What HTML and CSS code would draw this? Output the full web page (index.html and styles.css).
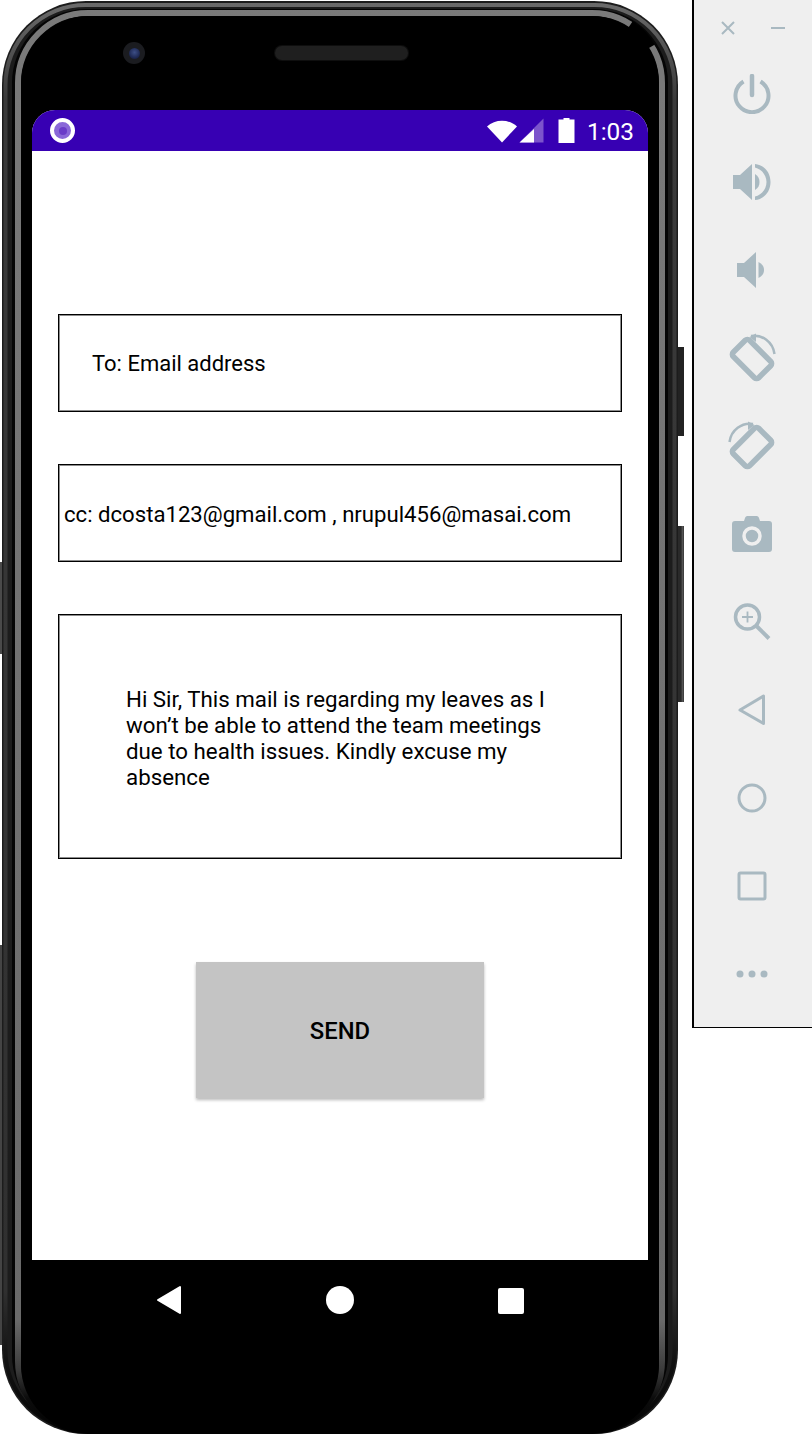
FILE: index.html
```html
<!DOCTYPE html>
<html lang="en">
<head>
<meta charset="utf-8">
<title>Email app on emulator</title>
<link rel="stylesheet" href="styles.css">
</head>
<body>
<div class="stage">
  <div class="device">
    <div class="key key-left-a"></div>
    <div class="key key-left-b"></div>
    <div class="key key-right-a"></div>
    <div class="key key-right-b"></div>
    <svg class="shell" width="680" height="1434" viewBox="0 0 680 1434" aria-hidden="true">
      <defs>
        <linearGradient id="fade" x1="0" y1="0" x2="0" y2="1434" gradientUnits="userSpaceOnUse">
          <stop offset="0" stop-color="#7a7a7a"/>
          <stop offset="0.92" stop-color="#6a6a6a"/>
          <stop offset="0.955" stop-color="#3c3c3c"/>
          <stop offset="0.975" stop-color="#0c0c0c"/>
          <stop offset="1" stop-color="#000"/>
        </linearGradient>
        <linearGradient id="fade2" x1="0" y1="0" x2="0" y2="1434" gradientUnits="userSpaceOnUse">
          <stop offset="0" stop-color="#6c6c6c"/>
          <stop offset="0.07" stop-color="#3a3a3a"/>
          <stop offset="0.9" stop-color="#303030"/>
          <stop offset="0.95" stop-color="#111"/>
          <stop offset="1" stop-color="#050505"/>
        </linearGradient>
      </defs>
      <rect x="2" y="1" width="676" height="1433" rx="84" fill="#1c1c1c"/>
      <rect x="5.5" y="5" width="669" height="1425" rx="80" fill="none" stroke="url(#fade2)" stroke-width="4"/>
      <rect x="12" y="9" width="656" height="1420" rx="74" fill="#050505"/>
      <rect x="18" y="13" width="644" height="1418" rx="70" fill="none" stroke="url(#fade)" stroke-width="6"/>
      <rect x="21" y="16" width="638" height="1417" rx="68" fill="#000"/>
      <path d="M630.500 24.500A70 70 0 0 1 651.500 46.500" fill="none" stroke="#000" stroke-width="8"/>
    </svg>
    <div class="hardware">
      <div class="camera"><div class="lens"></div></div>
      <div class="speaker"></div>
    </div>
    <div class="screen">
      <div class="status">
        <div class="status-dot"><div class="status-dot-core"></div></div>
        <div class="status-right">
          <svg class="ic-wifi" width="32" height="25" viewBox="0 0 32 25"><path d="M1 8.500C9 .8 23 .8 31 8.500L16 24.500Z" fill="#fff"/></svg>
          <svg class="ic-signal" width="25" height="25" viewBox="0 0 25 25"><path d="M24.500 .5V24.500H.5Z" fill="#7c54cc"/><path d="M15 11V24.500H.5L15 11Z" fill="#fff"/></svg>
          <svg class="ic-battery" width="17" height="25" viewBox="0 0 17 25"><path d="M5.500 0H11.500V1.500H16.500V25H.5V1.500H5.500Z" fill="#fff"/></svg>
          <span class="clock">1:03</span>
        </div>
      </div>
      <div class="content">
        <div class="field field-to">To: Email address</div>
        <div class="field field-cc">cc: dcosta123@gmail.com , nrupul456@masai.com</div>
        <div class="field field-body"><p class="body-text">Hi Sir, This mail is regarding my leaves as I won’t be able to attend the team meetings due to health issues. Kindly excuse my absence</p></div>
        <div class="send">SEND</div>
      </div>
    </div>
    <div class="navbar">
      <svg width="26" height="30" viewBox="0 0 26 30"><path d="M24 2V28L2 15Z" fill="#fff" stroke="#fff" stroke-width="2" stroke-linejoin="round"/></svg>
      <div class="nav-home"></div>
      <div class="nav-recent"></div>
    </div>
  </div>
  <aside class="panel">
    <div class="panel-head">
      <svg width="16" height="16" viewBox="0 0 16 16"><path d="M2 2L14 14M14 2L2 14" stroke="#a9b9c1" stroke-width="2" fill="none"/></svg>
      <svg width="16" height="16" viewBox="0 0 16 16"><path d="M1 8H15" stroke="#a9b9c1" stroke-width="2" fill="none"/></svg>
    </div>
    <div class="tool"><svg width="40" height="40" viewBox="0 0 40 40"><path d="M11.500 7.500A16.500 16.500 0 1 0 28.500 7.500" fill="none" stroke="#a9b9c1" stroke-width="4"/><path d="M20 2V21" stroke="#a9b9c1" stroke-width="4.500" stroke-linecap="round" fill="none"/></svg></div>
    <div class="tool"><svg width="40" height="40" viewBox="0 0 40 40"><path d="M1 13H8L20 2V38L8 27H1Z" fill="#a9b9c1"/><path d="M23 12C26.500 14 27.500 17 27.500 20S26.500 26 23 28Z" fill="#a9b9c1"/><path d="M23 2C32 3 38.500 10 38.500 20S32 37 23 38V34.500C29 33 34.500 27.500 34.500 20S29 7 23 5.500Z" fill="#a9b9c1"/></svg></div>
    <div class="tool"><svg width="40" height="40" viewBox="0 0 40 40"><path d="M5 13H12L24 2V38L12 27H5Z" fill="#a9b9c1"/><path d="M26.500 12C30 13.500 32 16.500 32 20S30 26.500 26.500 28Z" fill="#a9b9c1"/></svg></div>
    <div class="tool"><svg width="52" height="52" viewBox="0 0 52 52"><rect x="8" y="15.500" width="36" height="23" rx="3" transform="rotate(45 26 27)" fill="none" stroke="#a9b9c1" stroke-width="5.500"/><path d="M25 4C36 2 47 10 48.500 22" fill="none" stroke="#a9b9c1" stroke-width="2.500"/><path d="M23.500 5L30 1.500L30 10Z" fill="#a9b9c1"/></svg></div>
    <div class="tool"><svg width="52" height="52" viewBox="0 0 52 52"><rect x="8" y="15.500" width="36" height="23" rx="3" transform="rotate(-45 26 27)" fill="none" stroke="#a9b9c1" stroke-width="5.500"/><path d="M27 4C16 2 5 10 3.500 22" fill="none" stroke="#a9b9c1" stroke-width="2.500"/><path d="M28.500 5L22 1.500L22 10Z" fill="#a9b9c1"/></svg></div>
    <div class="tool"><svg width="42" height="38" viewBox="0 0 42 38"><path d="M14 3C14.500 1.500 15.500 1 17 1H25C26.500 1 27.500 1.500 28 3L29 6H38C40 6 41 7 41 9V34C41 36 40 37 38 37H4C2 37 1 36 1 34V9C1 7 2 6 4 6H13Z" fill="#a9b9c1"/><circle cx="21" cy="21" r="8" fill="#a9b9c1" stroke="#efefef" stroke-width="3.500"/></svg></div>
    <div class="tool"><svg width="40" height="40" viewBox="0 0 40 40"><circle cx="15.500" cy="15" r="12" fill="none" stroke="#a9b9c1" stroke-width="3.500"/><path d="M24.500 24L37 36.500" stroke="#a9b9c1" stroke-width="4" fill="none"/><path d="M15.500 9.500V20.500M10 15H21" stroke="#a9b9c1" stroke-width="1.800" fill="none"/></svg></div>
    <div class="tool"><svg width="30" height="34" viewBox="0 0 30 34"><path d="M26.500 3V30.500L3 17Z" fill="none" stroke="#a9b9c1" stroke-width="3" stroke-linejoin="round"/></svg></div>
    <div class="tool"><svg width="32" height="32" viewBox="0 0 32 32"><circle cx="16" cy="16" r="13" fill="none" stroke="#a9b9c1" stroke-width="3"/></svg></div>
    <div class="tool"><svg width="32" height="32" viewBox="0 0 32 32"><rect x="3" y="3" width="26" height="26" rx="1.500" fill="none" stroke="#a9b9c1" stroke-width="3"/></svg></div>
    <div class="tool"><svg width="34" height="10" viewBox="0 0 34 10"><circle cx="5" cy="5" r="3.500" fill="#a9b9c1"/><circle cx="17" cy="5" r="3.500" fill="#a9b9c1"/><circle cx="29" cy="5" r="3.500" fill="#a9b9c1"/></svg></div>
  </aside>
</div>
</body>
</html>
```
FILE: styles.css
```css
* { box-sizing: border-box; }
html, body { margin: 0; padding: 0; background: #fff; }
body { width: 812px; height: 1434px; overflow: hidden; font-family: Roboto, "Liberation Sans", sans-serif; color: #000; }

.stage { display: flex; align-items: flex-start; width: 812px; height: 1434px; }

.device { position: relative; width: 692px; height: 1434px; padding-left: 32px; flex: none; }
.shell { position: absolute; left: 0; top: 0; }

.key { position: absolute; background: #3a3a3a; }
.key-left-a { left: 0; top: 562px; width: 3px; height: 92px; background: #4a4a4a; }
.key-left-b { left: 0; top: 945px; width: 3px; height: 400px; background: #444; }
.key-right-a { left: 677px; top: 347px; width: 7px; height: 89px; background: #222; }
.key-right-b { left: 677px; top: 526px; width: 7px; height: 176px; background: linear-gradient(90deg, #2a2a2a 0, #2a2a2a 55%, #555 80%, #333 100%); }

.hardware { position: relative; width: 616px; height: 110px; }
.camera { position: absolute; left: 91px; top: 42px; width: 22px; height: 22px; border-radius: 50%; background: #1b1c20; display: flex; align-items: center; justify-content: center; }
.lens { width: 11px; height: 11px; border-radius: 50%; background: radial-gradient(circle at 50% 40%, #3d4f86 0, #1f2a55 60%, #10152c 100%); }
.speaker { position: absolute; left: 243px; top: 46px; width: 133px; height: 14px; border-radius: 7px; background: #1f1f1f; box-shadow: 0 0 0 1px #0e0e0e; }

.screen { position: relative; width: 616px; height: 1150px; background: #fff; border-radius: 23px 23px 0 0; overflow: hidden; display: flex; flex-direction: column; }

.status { height: 41px; flex: none; background: #3700b3; display: flex; align-items: center; justify-content: space-between; padding: 0 14px 0 18px; }
.status-dot { width: 25px; height: 25px; border-radius: 50%; background: #8a68d8; border: 4px solid #fff; display: flex; align-items: center; justify-content: center; }
.status-dot-core { width: 8px; height: 8px; border-radius: 50%; background: #6a3cc8; }
.status-right { display: flex; align-items: center; }
.ic-wifi { margin-right: 1px; }
.ic-signal { margin-right: 14px; }
.ic-battery { margin-right: 12px; }
.clock { color: #fff; font-size: 24.400px; line-height: 41px; padding-top: 1px; }

.content { flex: 1; background: #fff; display: flex; flex-direction: column; align-items: center; padding-top: 163px; }

.field { width: 564px; border: 1px solid #000; box-shadow: inset 0 0 0 1px rgba(0,0,0,.45); font-size: 22.150px; line-height: 26px; }
.field-to { height: 98px; margin-bottom: 52px; padding: 36px 0 0 33px; font-size: 22px; }
.field-cc { height: 98px; margin-bottom: 52px; padding: 36px 0 0 5px; white-space: nowrap; }
.field-body { height: 245px; margin-bottom: 103px; padding: 71px 0 0 67px; font-size: 22.300px; }
.body-text { margin: 0; width: 430px; }

.send { width: 288px; height: 136px; padding-top: 2px; background: #c4c4c4; box-shadow: 0 2px 3px rgba(0,0,0,.28); display: flex; align-items: center; justify-content: center; font-size: 23.800px; font-weight: 500; }

.navbar { position: relative; display: flex; align-items: center; width: 616px; height: 80px; }
.navbar > svg { position: absolute; left: 124px; top: 25px; }
.nav-home { position: absolute; left: 294px; top: 26px; width: 28px; height: 28px; border-radius: 50%; background: #fff; }
.nav-recent { position: absolute; left: 466px; top: 28px; width: 26px; height: 26px; border-radius: 2px; background: #fff; }

.panel { width: 120px; height: 1028px; flex: none; background: #efefef; border-left: 2px solid #000; border-bottom: 1px solid #000; }
.panel-head { height: 50px; display: flex; justify-content: space-between; padding: 20px 26px 0 26px; }
.tool { height: 88px; display: flex; align-items: center; justify-content: center; padding-right: 2px; }
```
